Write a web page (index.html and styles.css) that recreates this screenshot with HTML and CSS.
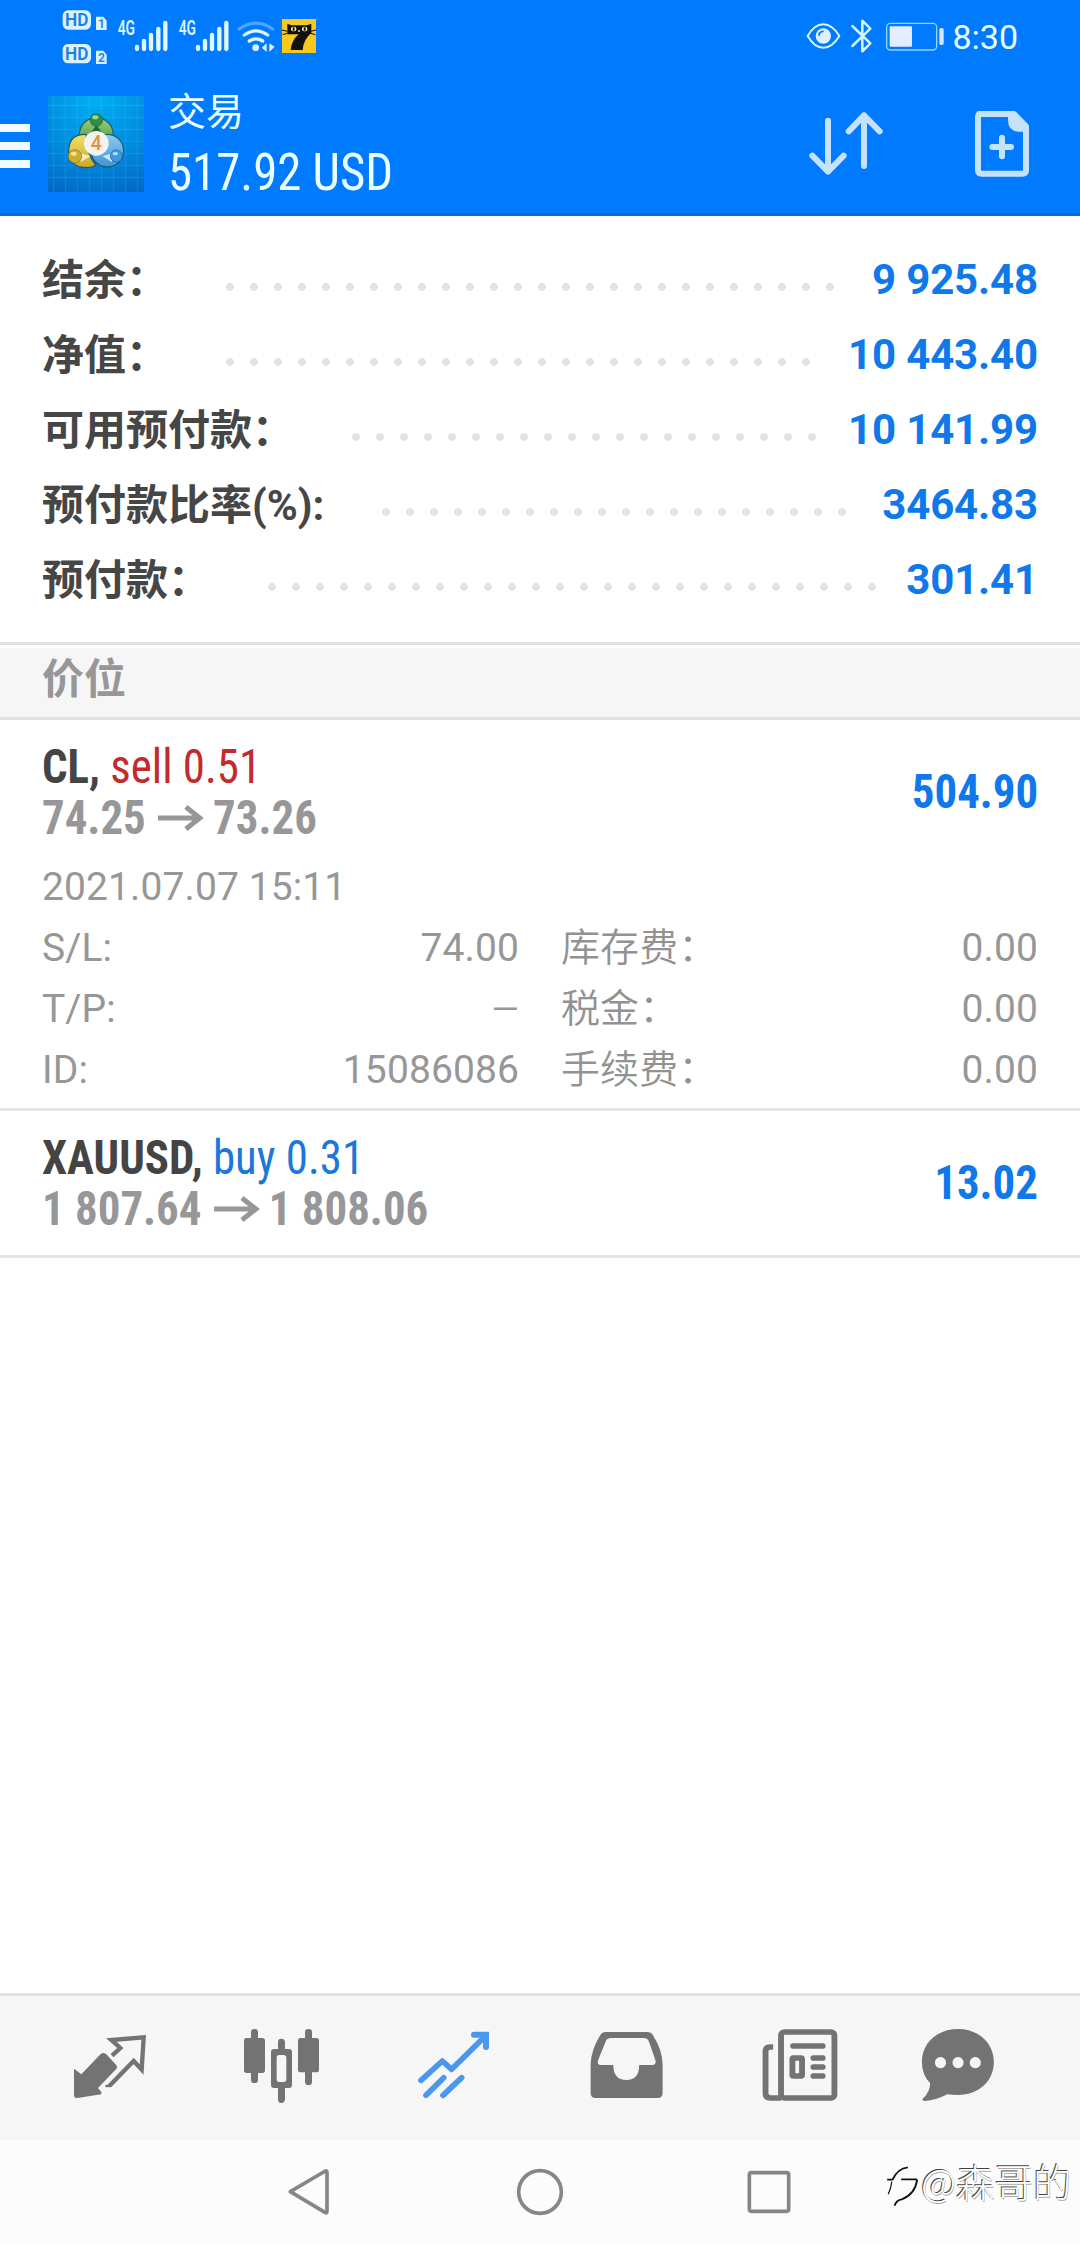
FILE: index.html
```html
<!DOCTYPE html>
<html lang="zh-CN">
<head>
<meta charset="utf-8">
<title>交易</title>
<link rel="stylesheet" href="styles.css">
</head>
<body>
<header class="header">
  <div class="statusbar">
    <svg class="status-left" viewBox="180 0 780 216" width="260" height="72" fill="#d9f2ff">
      <rect x="188" y="31" width="85" height="58" rx="16"/>
      <text class="svg-hd" x="195" y="79" textLength="70" lengthAdjust="spacingAndGlyphs">HD</text>
      <path d="M288 50h22l10 12v28h-32z"/>
      <text class="svg-num" x="294" y="85">1</text>
      <rect x="188" y="132" width="85" height="58" rx="16"/>
      <text class="svg-hd" x="195" y="180" textLength="70" lengthAdjust="spacingAndGlyphs">HD</text>
      <path d="M288 152h22l10 12v28h-32z"/>
      <text class="svg-num" x="294" y="187">2</text>
      <text class="svg-net" x="353" y="104" textLength="52" lengthAdjust="spacingAndGlyphs">4G</text>
      <g id="bars" stroke="#e2f6ff" stroke-width="13" stroke-linecap="round">
        <path d="M411 141v6M432 123v24M453 105v42M475 87v60M496 69v78"/>
      </g>
      <text class="svg-net" x="536" y="104" textLength="52" lengthAdjust="spacingAndGlyphs">4G</text>
      <use href="#bars" x="183"/>
      <g fill="none" stroke="#e2f6ff" stroke-width="10" stroke-linecap="round">
        <path stroke="#4da6ff" d="M717 87Q768 52 818 87"/>
        <path d="M733 105Q768 80 803 105M748 123Q768 110 788 123"/>
      </g>
      <circle cx="767" cy="143" r="10"/>
      <path d="M800 130v26l-15-13zM808 130v26l16-16z"/>
      <rect x="846" y="57" width="102" height="102" fill="#f7c81e"/>
      <g fill="#111"><path d="M862 71l13 5h46l13-5v28Q910 118 908 150H872Q874 122 896 103H862z"/><path d="M846 90l16 4M948 90l-16 4M848 104l14-4M946 104l-14-4" stroke="#111" stroke-width="3"/></g>
      <g fill="#fff6c0"><rect x="873" y="80" width="16" height="14" rx="6"/><rect x="906" y="80" width="16" height="14" rx="6"/><rect x="894" y="91" width="6" height="4"/></g>
      <path d="M881 82v10M914 82v10" stroke="#111" stroke-width="6"/>
    </svg>
    <div class="status-right">
      <svg viewBox="135 0 420 216" width="140" height="72" fill="none" stroke="#d4f4ff" stroke-linecap="round" stroke-linejoin="round">
        <path stroke-width="6" d="M143 108Q163 73 190 73T238 108Q217 143 190 143T143 108z"/>
        <circle cx="190" cy="108" r="23" fill="#dcf0ff" stroke="none"/>
        <path stroke="#007aff" stroke-width="5" d="M177 106q0-11 12-12"/>
        <path stroke-width="7.500" d="M277 78l54 52-24 24V62l24 24-54 52"/>
        <rect x="380" y="70" width="150" height="80" rx="11" stroke="#8fd6ff" stroke-width="4"/>
        <rect x="389" y="79" width="67" height="61" rx="3" fill="#e2eeff" stroke="none"/>
        <rect x="538" y="84" width="13" height="51" rx="5" fill="#d4e8ff" stroke="none"/>
      </svg>
      <span class="clock">8:30</span>
    </div>
  </div>
  <div class="appbar">
    <div class="menu"><i></i><i></i><i></i></div>
    <svg class="logo" viewBox="144 288 288 288" width="96" height="96">
      <defs>
        <radialGradient id="sky" cx=".5" cy="0" r="1.100"><stop offset="0" stop-color="#00b0f2"/><stop offset=".6" stop-color="#0088dc"/><stop offset="1" stop-color="#0068c2"/></radialGradient>
        <linearGradient id="green" x2="0" y2="1"><stop stop-color="#9fd07e"/><stop offset="1" stop-color="#2f8a34"/></linearGradient>
        <linearGradient id="gold" x2="0" y2="1"><stop stop-color="#f1e36a"/><stop offset="1" stop-color="#c9a820"/></linearGradient>
        <linearGradient id="blue" x2="0" y2="1"><stop stop-color="#8ccbf2"/><stop offset="1" stop-color="#3d95d6"/></linearGradient>
      </defs>
      <rect x="144" y="288" width="288" height="288" fill="url(#sky)"/>
      <path d="M160 288V576M196 288V576M232 288V576M268 288V576M304 288V576M340 288V576M376 288V576M412 288V576M144 316H432M144 352H432M144 388H432M144 424H432M144 460H432M144 496H432M144 532H432" stroke="#8adcff" stroke-opacity=".16" stroke-width="3"/>
      <g stroke="#1c5f74" stroke-width="4">
        <circle cx="289" cy="404" r="51" fill="url(#green)"/>
        <circle cx="322" cy="452" r="49" fill="url(#blue)"/>
        <path fill="url(#gold)" d="M258 403Q205 402 206 455Q208 503 262 503Q278 503 288 495Q262 470 258 403z"/>
        <path d="M262 412L289 376L318 412z" fill="#1f6a34" stroke="none"/>
      </g>
      <path d="M232 458l40 10-30 18zM345 458l-38 10 28 18z" fill="#fff" opacity=".7"/>
      <g stroke-width="2">
        <circle cx="289" cy="360" r="19" fill="#2f8e46" stroke="#1b6631"/>
        <circle cx="225" cy="469" r="20" fill="#cfae2e" stroke="#8e781c"/>
        <circle cx="349" cy="468" r="18" fill="#3f9be0" stroke="#1c65a8"/>
      </g>
      <ellipse cx="286" cy="352" rx="9" ry="6" fill="#9bd8a4"/>
      <ellipse cx="221" cy="461" rx="9" ry="6" fill="#f6e793"/>
      <ellipse cx="346" cy="461" rx="8" ry="5" fill="#b5e0fb"/>
      <circle cx="289" cy="430" r="37" fill="#f4f3f0"/>
      <text class="svg-four" x="289" y="451" text-anchor="middle">4</text>
    </svg>
    <div class="titles">
      <div class="title">交易</div>
      <div class="total cond">517.92 USD</div>
    </div>
    <svg class="actions" viewBox="120 288 720 288" width="240" height="96" fill="none" stroke="#c4e3fb" stroke-width="18" stroke-linecap="round" stroke-linejoin="round">
      <path d="M204 362V514M157 467l47 48 47-48M312 498V346M266 394l46-48 47 48"/>
      <path d="M657 342H762L798 379V510Q798 521 787 521H665Q654 521 654 510V352Q654 342 665 342z"/>
      <path fill="#c4e3fb" stroke="none" d="M744 345h20l36 34v16h-22q-34 0-34-34z"/>
      <path d="M697 441h56M726 413v56"/>
    </svg>
  </div>
</header>

<section class="summary">
  <div class="line"><span>结余：</span><i class="dots" style="--dots:26"></i><b>9 925.48</b></div>
  <div class="line"><span>净值：</span><i class="dots" style="--dots:25"></i><b>10 443.40</b></div>
  <div class="line"><span>可用预付款：</span><i class="dots" style="--dots:20"></i><b>10 141.99</b></div>
  <div class="line"><span>预付款比率(%):</span><i class="dots" style="--dots:20"></i><b>3464.83</b></div>
  <div class="line"><span>预付款：</span><i class="dots" style="--dots:26"></i><b>301.41</b></div>
</section>

<h2 class="section-title">价位</h2>

<main>
  <article class="position">
    <div class="deal">
      <div>
        <div class="symbol cond"><b>CL,</b> <span class="sell">sell 0.51</span></div>
        <div class="prices cond"><span>74.25</span><svg class="arrow" viewBox="0 0 46 26" width="49" height="26" preserveAspectRatio="none"><path d="M0 13H42M28 2L42 13L28 24"/></svg><span>73.26</span></div>
      </div>
      <div class="profit cond">504.90</div>
    </div>
    <div class="opened">2021.07.07 15:11</div>
    <dl class="details">
      <dt>S/L:</dt><dd>74.00</dd><dt>库存费：</dt><dd>0.00</dd>
      <dt>T/P:</dt><dd class="none">—</dd><dt>税金：</dt><dd>0.00</dd>
      <dt>ID:</dt><dd>15086086</dd><dt>手续费：</dt><dd>0.00</dd>
    </dl>
  </article>
  <article class="position">
    <div class="deal">
      <div>
        <div class="symbol cond"><b>XAUUSD,</b> <span class="buy">buy 0.31</span></div>
        <div class="prices cond"><span>1 807.64</span><svg class="arrow" viewBox="0 0 46 26" width="49" height="26" preserveAspectRatio="none"><path d="M0 13H42M28 2L42 13L28 24"/></svg><span>1 808.06</span></div>
      </div>
      <div class="profit cond">13.02</div>
    </div>
  </article>
</main>

<nav class="tabs">
  <svg viewBox="-48 48 516 432" fill="none" stroke="#737373" stroke-width="13" stroke-linejoin="miter">
    <path fill="#737373" stroke="none" d="M102 266L124 283L180 224Q189 214 199 223L228 254Q234 261 228 268L174 324L184 336V343L112 354Q102 355 102 345z"/>
    <path d="M216 227L241 204L214 180L311 172L305 269L281 243L208 318"/><path d="M196 318h14" stroke-width="7"/>
  </svg>
  <svg viewBox="468 48 516 432" fill="#737373">
    <rect x="612" y="174" width="63" height="105" rx="8"/><rect x="633" y="147" width="21" height="162" rx="10"/>
    <rect x="774" y="174" width="63" height="103" rx="8"/><rect x="795" y="147" width="21" height="168" rx="10"/>
    <path fill-rule="evenodd" d="M702 207h45q9 0 9 9v99q0 9-9 9h-45q-9 0-9-9v-99q0-9 9-9zM718 225q-8 0-8 8v65q0 8 8 8h13q8 0 8-8v-65q0-8-8-8z"/>
    <path d="M714 210v-24q0-10 10-10t11 10v24zM714 320v38q0 11 10 11t11-11v-38z"/>
  </svg>
  <svg viewBox="984 48 516 432" fill="none" stroke="#4a97ee" stroke-width="17" stroke-linecap="round" stroke-linejoin="round">
    <path d="M1143 301L1207 243L1235 268L1336 168"/><path d="M1302 164H1338V201" stroke-width="18" stroke-linejoin="miter"/><path d="M1158 346L1211 293M1209 346L1265 293"/>
  </svg>
  <svg viewBox="0 48 499.500 432" preserveAspectRatio="none" fill="#737373">
    <path fill-rule="evenodd" d="M190 156H312Q323 156 328 166Q355 210 356 252V338Q356 354 341 354H162Q147 354 147 338V252Q149 208 175 166Q180 156 190 156zM206 174Q195 174 191 184L169 240Q164 255 178 255H213Q213 300 251 300Q288 300 288 255H325Q339 255 335 240L316 184Q312 174 301 174z"/>
  </svg>
  <svg viewBox="499.500 48 499.500 432" preserveAspectRatio="none" fill="none" stroke="#737373" stroke-width="17">
    <rect x="700" y="156" width="155" height="198" rx="10"/>
    <path d="M677 201H668Q655 201 655 214V340Q655 354 669 354H700"/>
    <path stroke-linecap="round" d="M735 198H821M794 234H821M794 261H821M794 288H821"/>
    <rect x="733" y="234" width="28" height="54" rx="3"/>
  </svg>
  <svg viewBox="999 48 499.500 432" preserveAspectRatio="none" fill="#737373">
    <path fill-rule="evenodd" d="M1214 147C1275 147 1318 190 1318 246S1275 345 1214 345Q1197 345 1183 343Q1150 361 1117 363Q1106 362 1113 355Q1133 335 1133 310Q1109 284 1109 246C1109 190 1152 147 1214 147zM1163 231a16 17 0 1 0 .1 0zM1214 231a16 17 0 1 0 .1 0zM1264 231a16 17 0 1 0 .1 0z"/>
  </svg>
</nav>

<footer class="navbar">
  <svg class="keys" viewBox="720 480 1620 312" width="540" height="104" fill="none" stroke="#868686" stroke-width="11" stroke-linejoin="round">
    <path d="M751 635L856 573Q861 571 861 577V694Q861 700 856 698z"/>
    <circle cx="1500" cy="636" r="64"/>
    <rect x="2128" y="578" width="118" height="116" rx="6"/>
  </svg>
  <div class="watermark">
    <svg viewBox="40 42 110 138" width="37" height="46" fill="none" stroke="#111" stroke-width="5.500"><path d="M52 92h16q16-34 46-37M94 91h48M142 92q-6 44-46 59-16 2-22 19"/><path stroke-width="3.500" d="M66 98q-3 22-11 38"/></svg>
    <span>@森哥的</span>
  </div>
</footer>
</body>
</html>
```

FILE: styles.css
```css
* { box-sizing: border-box; }
body {
  margin: 0;
  width: 1080px;
  height: 2244px;
  display: flex;
  flex-direction: column;
  background: #fff;
  font-family: Roboto, "Noto Sans CJK SC", sans-serif;
  overflow: hidden;
}
svg { display: block; flex: none; }
.cond {
  font-family: "Roboto Condensed", Roboto, sans-serif;
  font-stretch: 75%;
  white-space: pre;
  transform: scaleX(.935);
  transform-origin: left;
}

.header { height: 216px; background: #007aff; border-bottom: 3px solid #0a6ad8; color: #eaffff; }
.statusbar { height: 72px; display: flex; justify-content: space-between; padding: 0 62px 0 60px; }
.status-right { display: flex; gap: 7px; }
.clock { font-size: 34px; line-height: 74px; }
.svg-hd { font: 600 55px Roboto, sans-serif; fill: #1b7fe8; }
.svg-num { font: 700 36px Roboto, sans-serif; fill: #2a86ea; }
.svg-net { font: 600 58px Roboto, sans-serif; fill: #d9f2ff; }
.svg-four { font: 500 58px Roboto, sans-serif; fill: #ee8c3c; }
.appbar { height: 144px; display: flex; padding-top: 24px; }
.menu { width: 30px; height: 96px; margin-right: 18px; padding-top: 28px; display: flex; flex-direction: column; gap: 10px; }
.menu i { height: 8px; background: #f2fbff; }
.titles { margin-left: 24px; margin-top: -9px; }
.title { font-size: 38px; line-height: 50px; }
.total { font-size: 51px; line-height: 60px; margin-top: 6px; transform: scaleX(.957); }
.actions { margin-left: auto; margin-right: 40px; }

.summary { height: 426px; padding: 26px 42px 0; }
.line { height: 75px; display: flex; align-items: center; font-size: 42px; font-weight: 700; color: #464646; }
.line span { margin-bottom: 6px; }
.line b { margin-left: auto; color: #0f78ea; font-weight: 700; white-space: pre; letter-spacing: -.150px; }
.dots {
  width: calc(24px * var(--dots));
  height: 8px;
  margin: 14px 0 0 50px;
  background: radial-gradient(circle at 12px 4px, #e2e2e2 3.500px, transparent 4.300px) 0 0 / 24px 8px;
}

.section-title {
  height: 78px;
  margin: 0;
  padding-left: 42px;
  border-top: 3px solid #e2e2e2;
  border-bottom: 3px solid #e2e2e2;
  background: #f6f6f6;
  box-shadow: inset 0 3px #fff;
  font-size: 42px;
  line-height: 69px;
  color: #979799;
}

.position { padding: 21px 42px 0; border-bottom: 3px solid #e4e4e4; height: 391px; }
.position + .position { height: 147px; }
.deal { display: flex; justify-content: space-between; }
.symbol { font-size: 48px; line-height: 51px; color: #444; }
.sell { color: #c22a2c; }
.buy { color: #1a78dc; }
.prices { font-size: 48px; font-weight: 700; line-height: 51px; color: #979799; display: flex; align-items: center; }
.arrow { margin: 0 10px 0 13px; }
.arrow path { fill: none; stroke: #979799; stroke-width: 5; }
.profit { font-size: 48px; font-weight: 700; line-height: 51px; color: #0f78ea; padding-top: 25px; transform-origin: right; }
.opened, .details { font-size: 39px; font-weight: 400; color: #979797; letter-spacing: .100px; }
.opened { line-height: 60px; margin-top: 14px; }
.details { margin: 1px 0 0; display: grid; grid-template-columns: 160px 317px 200px 1fr; grid-auto-rows: 61px; line-height: 61px; }
.details dt:nth-of-type(even) { padding-left: 42px; white-space: nowrap; font-weight: 350; color: #929292; }
.details dd { margin: 0; text-align: right; }
.details .none { font-size: 35px; }

.tabs { margin-top: auto; height: 147px; flex: none; padding-left: 24px; border-top: 3px solid #e2e2e2; background: #f6f6f6; display: flex; }
.tabs svg { width: 172px; height: 144px; }
.navbar { height: 104px; flex: none; background: #fcfcfc; display: flex; padding-left: 280px; }
.watermark { margin-left: 63px; padding-top: 16px; display: flex; height: 70px; }
.watermark svg { margin-top: 7px; }
.watermark span { margin-left: 1px; font: 300 38.500px/48px "Noto Sans CJK SC", sans-serif; color: #fff; text-shadow: -1px -1px 0 #444, .5px .5px 0 #aaa; white-space: nowrap; }
```
